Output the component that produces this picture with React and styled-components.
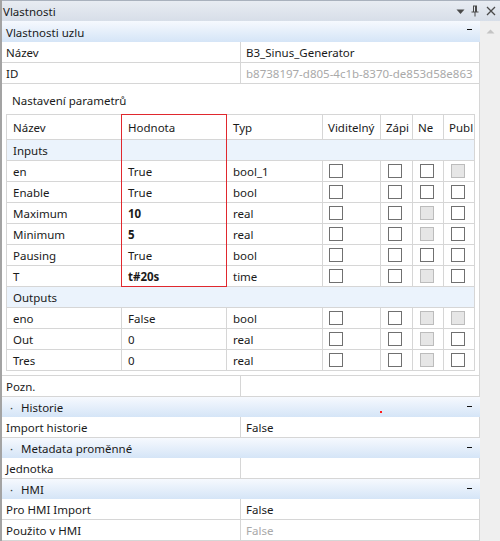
import React from "react";
import styled, { createGlobalStyle } from "styled-components";

const Global = createGlobalStyle`
  html, body { margin: 0; padding: 0; background: #ffffff; }
  body { font-family: "Noto Sans", "Open Sans", sans-serif; font-size: 11.5px; color: #1a1a1a; }
  * { box-sizing: border-box; }
`;

const Panel = styled.div`
  width: 500px;
  height: 541px;
  display: flex;
  flex-direction: column;
  border-left: 2px solid #a3a3a3;
  overflow: hidden;
  background: #ffffff;
`;

const TitleBar = styled.div`
  height: 21px;
  flex: none;
  display: flex;
  align-items: center;
  padding-left: 1px;
  border-top: 1px solid #a9b1bd;
  background: linear-gradient(to bottom, #e8ecf2, #d7dee8);
`;

const TitleText = styled.div`
  flex: 1;
  line-height: 20px;
  padding-top: 1px;
`;

const TitleIcons = styled.div`
  display: flex;
  align-items: center;
  gap: 5px;
  padding-right: 3px;
  color: #4a4a4a;
`;

const Body = styled.div`
  flex: 1;
  display: flex;
  min-height: 0;
`;

const Content = styled.div`
  width: 478px;
  flex: none;
  display: flex;
  flex-direction: column;
`;

const Scrollbar = styled.div`
  flex: 1;
  background: #efefef;
  display: flex;
  justify-content: center;
  padding-top: 8px;
`;

const CategoryHeader = styled.div`
  position: relative;
  height: ${(p) => (p.$tall ? 21 : 20)}px;
  flex: none;
  display: flex;
  align-items: center;
  padding-left: 4px;
  padding-right: 8px;
  padding-top: 1px;
  background: linear-gradient(to bottom, #f6f9fe, #d5e5f7);
`;

const Bullet = styled.span`
  width: 15px;
  padding-left: 4px;
  color: #333;
`;

const CategoryText = styled.span`
  flex: 1;
`;

const Collapse = styled.span`
  width: 5px;
  height: 1px;
  background: #111;
  margin-top: ${(p) => (p.$raise ? -3 : -5)}px;
`;

const RedDot = styled.span`
  position: absolute;
  left: 378px;
  top: 14px;
  width: 2px;
  height: 2px;
  background: #ff1a1a;
`;

const PropRow = styled.div`
  height: 21px;
  flex: none;
  display: grid;
  grid-template-columns: 239px 1fr;
  border-bottom: 1px solid #d6d6d6;
  border-right: 1px solid #d6d6d6;
`;

const PropLabel = styled.div`
  padding-left: 4px;
  padding-top: 1px;
  line-height: 19px;
  border-right: 1px solid #d6d6d6;
  white-space: nowrap;
  overflow: hidden;
`;

const PropValue = styled.div`
  padding-left: 5px;
  padding-top: 1px;
  line-height: 19px;
  white-space: nowrap;
  overflow: hidden;
  color: ${(p) => (p.$muted ? "#a9a9a9" : "#1a1a1a")};
`;

const ParamSection = styled.div`
  flex: none;
  padding: 6px 0 4px 4px;
  border-bottom: 1px solid #d6d6d6;
  border-right: 1px solid #d6d6d6;
`;

const SectionTitle = styled.div`
  line-height: 20px;
  padding-left: 6px;
  padding-top: 1px;
  margin-bottom: 3px;
`;

const TableWrap = styled.div`
  position: relative;
  width: 469px;
`;

const ParamTable = styled.div`
  display: grid;
  grid-template-columns: 115px 105px 96px 58px 32px 31px 31px;
  border-left: 1px solid #d6d6d6;
  border-top: 1px solid #d6d6d6;
`;

const Cell = styled.div`
  height: ${(p) => (p.$head ? 25 : 21)}px;
  line-height: ${(p) => (p.$head ? 23 : 19)}px;
  padding-top: 1px;
  padding-left: ${(p) => (p.$head && p.$narrow ? 5 : 6)}px;
  border-right: 1px solid #d6d6d6;
  border-bottom: 1px solid #d6d6d6;
  white-space: nowrap;
  overflow: hidden;
  font-weight: ${(p) => (p.$bold ? 700 : 400)};
`;

const GroupRow = styled.div`
  grid-column: 1 / -1;
  height: 21px;
  line-height: 19px;
  padding-top: 1px;
  padding-left: 6px;
  background: #ebf3fc;
  border-right: 1px solid #d6d6d6;
  border-bottom: 1px solid #d6d6d6;
`;

const CheckCell = styled.div`
  height: 21px;
  display: flex;
  align-items: center;
  padding-left: ${(p) => p.$pad}px;
  border-right: 1px solid #d6d6d6;
  border-bottom: 1px solid #d6d6d6;
`;

const Box = styled.span`
  width: 14px;
  height: 14px;
  border: 1px solid ${(p) => (p.$disabled ? "#bcbcbc" : "#707070")};
  background: ${(p) => (p.$disabled ? "#e6e6e6" : "#ffffff")};
`;

const Highlight = styled.div`
  position: absolute;
  left: 115px;
  top: 0;
  width: 106px;
  height: 173px;
  border: 1px solid #e0282e;
  pointer-events: none;
`;

const params = [
  { group: "Inputs" },
  { name: "en", value: "True", type: "bool_1", dis: [0, 0, 0, 1] },
  { name: "Enable", value: "True", type: "bool", dis: [0, 0, 0, 0] },
  { name: "Maximum", value: "10", bold: true, type: "real", dis: [0, 0, 1, 0] },
  { name: "Minimum", value: "5", bold: true, type: "real", dis: [0, 0, 1, 0] },
  { name: "Pausing", value: "True", type: "bool", dis: [0, 0, 0, 0] },
  { name: "T", value: "t#20s", bold: true, type: "time", dis: [0, 0, 1, 0] },
  { group: "Outputs" },
  { name: "eno", value: "False", type: "bool", dis: [0, 0, 1, 1] },
  { name: "Out", value: "0", type: "real", dis: [0, 0, 1, 0] },
  { name: "Tres", value: "0", type: "real", dis: [0, 0, 1, 0] },
];

const heads = ["Název", "Hodnota", "Typ", "Viditelný", "Zápi", "Ne", "Publ"];
const checkPads = [6, 7, 7, 7];

function Category({ title, bullet, tall, children }) {
  return (
    <CategoryHeader $tall={tall}>
      {bullet && <Bullet>·</Bullet>}
      <CategoryText>{title}</CategoryText>
      <Collapse $raise={!tall} />
      {children}
    </CategoryHeader>
  );
}

function Prop({ label, value, muted }) {
  return (
    <PropRow>
      <PropLabel>{label}</PropLabel>
      <PropValue $muted={muted}>{value}</PropValue>
    </PropRow>
  );
}

export default function App() {
  return (
    <>
      <Global />
      <Panel>
        <TitleBar>
          <TitleText>Vlastnosti</TitleText>
          <TitleIcons>
            <svg width="9" height="9" viewBox="0 0 9 9">
              <path d="M0.5 2.5 H8.5 L4.5 7 Z" fill="#4a4a4a" />
            </svg>
            <svg width="10" height="12" viewBox="0 0 10 12">
              <path d="M3 1 H7 M3.5 1 V7 M6.5 1 V7 M1.5 7 H8.5 M5 7 V11.5" stroke="#4a4a4a" strokeWidth="1" fill="none" />
              <rect x="5" y="1" width="1.5" height="6" fill="#4a4a4a" />
            </svg>
            <svg width="12" height="12" viewBox="0 0 12 12">
              <path d="M2 2 L10 10 M10 2 L2 10" stroke="#4a4a4a" strokeWidth="1.3" />
            </svg>
          </TitleIcons>
        </TitleBar>
        <Body>
          <Content>
            <Category title="Vlastnosti uzlu" tall />
            <Prop label="Název" value="B3_Sinus_Generator" />
            <Prop label="ID" value="b8738197-d805-4c1b-8370-de853d58e863" muted />
            <ParamSection>
              <SectionTitle>Nastavení parametrů</SectionTitle>
              <TableWrap>
                <ParamTable>
                  {heads.map((h, i) => (
                    <Cell key={h} $head $narrow={i >= 3}>
                      {h}
                    </Cell>
                  ))}
                  {params.map((p, i) =>
                    p.group ? (
                      <GroupRow key={i}>{p.group}</GroupRow>
                    ) : (
                      <React.Fragment key={i}>
                        <Cell>{p.name}</Cell>
                        <Cell $bold={p.bold}>{p.value}</Cell>
                        <Cell>{p.type}</Cell>
                        {p.dis.map((d, j) => (
                          <CheckCell key={j} $pad={checkPads[j]}>
                            <Box $disabled={!!d} />
                          </CheckCell>
                        ))}
                      </React.Fragment>
                    )
                  )}
                </ParamTable>
                <Highlight />
              </TableWrap>
            </ParamSection>
            <Prop label="Pozn." value="" />
            <Category title="Historie" bullet>
              <RedDot />
            </Category>
            <Prop label="Import historie" value="False" />
            <Category title="Metadata proměnné" bullet />
            <Prop label="Jednotka" value="" />
            <Category title="HMI" bullet />
            <Prop label="Pro HMI Import" value="False" />
            <Prop label="Použito v HMI" value="False" muted />
          </Content>
          <Scrollbar>
            <svg width="9" height="5" viewBox="0 0 9 5">
              <path d="M0.5 4.5 L4.5 0.5 L8.5 4.5 Z" fill="#c4c4c4" />
            </svg>
          </Scrollbar>
        </Body>
      </Panel>
    </>
  );
}
